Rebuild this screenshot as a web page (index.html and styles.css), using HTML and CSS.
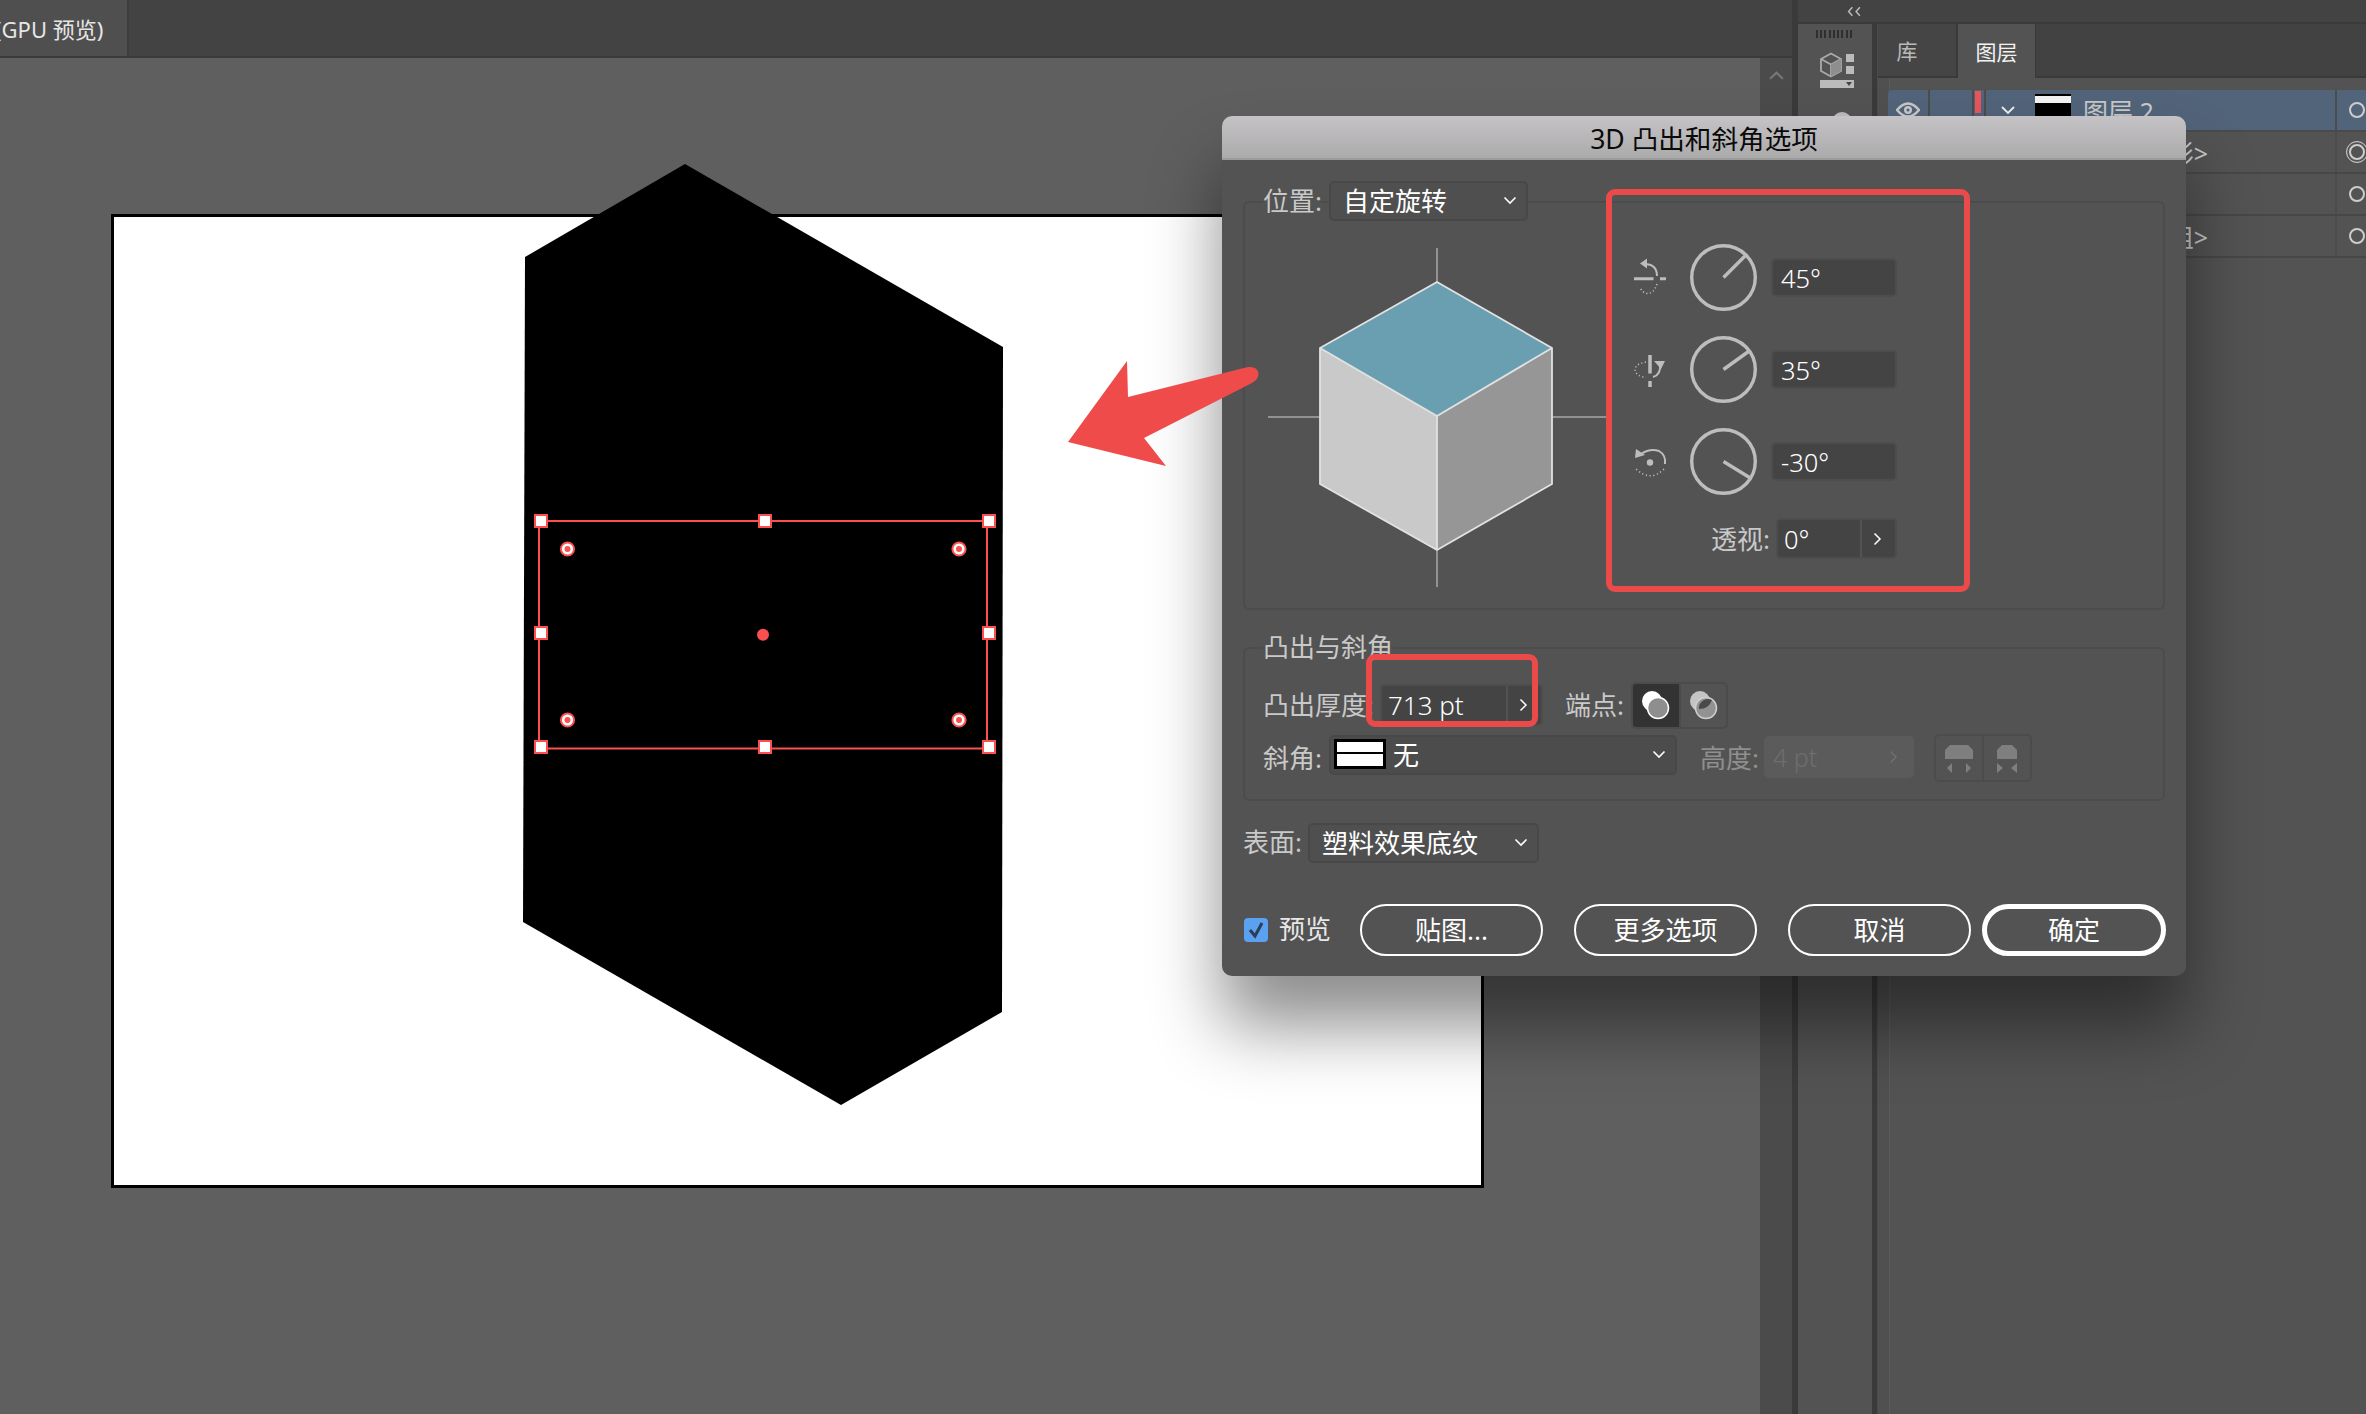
FILE: index.html
```html
<!DOCTYPE html>
<html lang="zh-CN">
<head>
<meta charset="utf-8">
<title>3D 凸出和斜角选项</title>
<link rel="stylesheet" href="styles.css">
</head>
<body>
<div class="app">
  <main class="main">
    <div class="tabbar"><div class="doc-tab"><span class="doc-title">(GPU 预览)</span></div></div>
    <div class="work">
      <div class="canvas">
        <div class="artboard"></div>
        <svg class="art" viewBox="0 58 1760 1356" aria-hidden="true">
          <polygon points="685,164 1003,347 1002,1012 841,1105 523,922 525,257" fill="#000"/>
          <rect x="539" y="521" width="448" height="227.500" fill="none" stroke="#fb4f50" stroke-width="2"/>
          <g fill="#fff" stroke="#fb4f50" stroke-width="2">
            <rect x="535" y="515" width="12" height="12"/><rect x="759" y="515" width="12" height="12"/><rect x="983" y="515" width="12" height="12"/>
            <rect x="535" y="627" width="12" height="12"/><rect x="983" y="627" width="12" height="12"/>
            <rect x="535" y="741" width="12" height="12"/><rect x="759" y="741" width="12" height="12"/><rect x="983" y="741" width="12" height="12"/>
            <circle cx="567.500" cy="549" r="6.600"/><circle cx="959" cy="549" r="6.600"/><circle cx="567.500" cy="720" r="6.600"/><circle cx="959" cy="720" r="6.600"/>
          </g>
          <g fill="#fb4f50">
            <circle cx="763" cy="634.700" r="6"/>
            <circle cx="567.500" cy="549" r="3"/><circle cx="959" cy="549" r="3"/><circle cx="567.500" cy="720" r="3"/><circle cx="959" cy="720" r="3"/>
          </g>
        </svg>
      </div>
      <div class="scrollbar">
        <svg class="scroll-up" viewBox="0 0 14 8" aria-hidden="true"><path d="M1 7 7 1.500 13 7" fill="none" stroke="#777" stroke-width="2"/></svg>
      </div>
    </div>
  </main>

  <aside class="dock">
    <div class="dock-head">
      <svg class="collapse" viewBox="0 0 14 10" aria-hidden="true"><path d="M5 1 1.500 5 5 9M12 1 8.500 5 12 9" fill="none" stroke="#bbb" stroke-width="1.400"/></svg>
    </div>
    <div class="dock-body">
      <div class="toolbar">
        <div class="grip"></div>
        <svg class="tool-3d" viewBox="0 0 36 36" aria-hidden="true">
          <path d="M11 1.500 21 7v12l-10 5.500L1 19V7z" fill="none" stroke="#aaa" stroke-width="1.800"/>
          <path d="M1 7l10 5.500L21 7M11 12.500v12" fill="none" stroke="#aaa" stroke-width="1.800"/>
          <path d="M11 12.500 21 7v12l-10 5.500z" fill="#8e8e8e"/>
          <rect x="26" y="2" width="8" height="8" fill="#bbb"/><rect x="26" y="14" width="8" height="8" fill="#bbb"/>
          <rect x="0" y="28" width="34" height="8" fill="#bbb"/><path d="M26 30h6l-3 4z" fill="#444"/>
        </svg>
        <div class="tool-round"></div>
      </div>
      <div class="panel">
        <div class="panel-tabs">
          <div class="panel-tab panel-tab-off">库</div>
          <div class="panel-tab panel-tab-on">图层</div>
        </div>
        <div class="layers">
          <div class="layer layer-on">
            <div class="cell cell-eye"><svg class="eye" viewBox="0 0 24 16" aria-hidden="true"><path d="M1 8q11-13 22 0-11 13-22 0z" fill="none" stroke="#c8c8c8" stroke-width="2.500"/><circle cx="12" cy="8" r="4" fill="#c8c8c8"/><circle cx="12" cy="8" r="1.500" fill="#52647a"/></svg></div>
            <div class="cell cell-lock"></div>
            <div class="cell cell-mark"></div>
            <div class="layer-main">
              <svg class="layer-chev" viewBox="0 0 16 10" aria-hidden="true"><path d="M2 2l6 6 6-6" fill="none" stroke="#eee" stroke-width="1.800"/></svg>
              <div class="thumb"></div>
              <span class="layer-name">图层 2</span>
            </div>
            <div class="cell cell-target"><div class="ring"></div></div>
          </div>
          <div class="layer">
            <div class="cell cell-eye"></div><div class="cell cell-lock"></div><div class="cell cell-plain"></div>
            <div class="layer-main"><span class="layer-name layer-name-end">&lt;矩形&gt;</span></div>
            <div class="cell cell-target"><div class="ring ring-double"></div></div>
          </div>
          <div class="layer">
            <div class="cell cell-eye"></div><div class="cell cell-lock"></div><div class="cell cell-plain"></div>
            <div class="layer-main"><span class="layer-name">&lt;路径&gt;</span></div>
            <div class="cell cell-target"><div class="ring"></div></div>
          </div>
          <div class="layer">
            <div class="cell cell-eye"></div><div class="cell cell-lock"></div><div class="cell cell-plain"></div>
            <div class="layer-main"><span class="layer-name layer-name-end">&lt;编组&gt;</span></div>
            <div class="cell cell-target"><div class="ring"></div></div>
          </div>
        </div>
      </div>
    </div>
  </aside>

  <section class="dialog">
    <header class="dialog-title">3D 凸出和斜角选项</header>
    <div class="dialog-body">

      <div class="group group-pos">
        <div class="legend">
          <span class="label label-two label-bg">位置:</span>
          <div class="select select-pos"><span>自定旋转</span><svg class="chev-down" viewBox="0 0 14 9" aria-hidden="true"><path d="M1.500 1.500 7 7l5.500-5.500" fill="none" stroke="#fff" stroke-width="1.600"/></svg></div>
        </div>
        <div class="pos-main">
          <svg class="cube" viewBox="0 0 338 339" aria-hidden="true">
            <path d="M169 0v34M169 302v37M0 169h52M284 169h54" stroke="#a8a8a8" stroke-width="1.500" fill="none"/>
            <polygon points="169,34 284,100 169,168 52,100" fill="#6a9fb2"/>
            <polygon points="52,100 169,168 169,302 52,236" fill="#c9c9c9"/>
            <polygon points="284,100 169,168 169,302 284,236" fill="#969696"/>
            <path d="M169 34 284 100V236L169 302 52 236V100zM52 100l117 68 115-68M169 168v134" fill="none" stroke="#e2e2e2" stroke-width="1.800" stroke-linejoin="round"/>
          </svg>
          <div class="rotations">
            <div class="rot-row">
              <svg class="axis" viewBox="1632 256 36 42" aria-hidden="true">
                <path d="M1634 277.700h19.500M1660 277.700h6" stroke="#bdbdbd" stroke-width="3" fill="none"/>
                <path d="M1644 263q13 0 13 12" stroke="#bdbdbd" stroke-width="2" fill="none"/>
                <path d="M1640 262.500l7-5v10z" fill="#bdbdbd"/>
                <path d="M1657 283q-3 9-9 9.500-5 0-8-6" stroke="#bdbdbd" stroke-width="1.500" stroke-dasharray="1.200 2.400" fill="none"/>
              </svg>
              <svg class="dial" viewBox="0 0 67 67" aria-hidden="true"><circle cx="33.500" cy="33.500" r="31.800" fill="none" stroke="#bdbdbd" stroke-width="3.400"/><path d="M33.500 33.500l22-22" stroke="#bdbdbd" stroke-width="3.400"/></svg>
              <div class="field">45°</div>
            </div>
            <div class="rot-row">
              <svg class="axis" viewBox="1632 348 36 42" aria-hidden="true">
                <path d="M1650 354v18.500M1650 380v6" stroke="#bdbdbd" stroke-width="3.500" fill="none"/>
                <path d="M1660 363q1 11-7 13" stroke="#bdbdbd" stroke-width="2" fill="none"/>
                <path d="M1654 360l11 0-4 8z" fill="#bdbdbd"/>
                <path d="M1646 361q-11 2-11 8 1 6 11 7.500" stroke="#bdbdbd" stroke-width="1.500" stroke-dasharray="1.200 2.400" fill="none"/>
              </svg>
              <svg class="dial" viewBox="0 0 67 67" aria-hidden="true"><circle cx="33.500" cy="33.500" r="31.800" fill="none" stroke="#bdbdbd" stroke-width="3.400"/><path d="M33.500 33.500l25-18" stroke="#bdbdbd" stroke-width="3.400"/></svg>
              <div class="field">35°</div>
            </div>
            <div class="rot-row">
              <svg class="axis" viewBox="1632 440 36 42" aria-hidden="true">
                <circle cx="1650" cy="461.500" r="3.200" fill="#bdbdbd"/>
                <path d="M1641 453q9-6 18-3 7 4 6 13" stroke="#bdbdbd" stroke-width="2" fill="none"/>
                <path d="M1635 457l1-9 9 6z" fill="#bdbdbd"/>
                <path d="M1664 468q-14 14-29-1" stroke="#bdbdbd" stroke-width="1.500" stroke-dasharray="1.200 2.600" fill="none"/>
              </svg>
              <svg class="dial" viewBox="0 0 67 67" aria-hidden="true"><circle cx="33.500" cy="33.500" r="31.800" fill="none" stroke="#bdbdbd" stroke-width="3.400"/><path d="M33.500 33.500l26 16" stroke="#bdbdbd" stroke-width="3.400"/></svg>
              <div class="field">-30°</div>
            </div>
            <div class="persp-row">
              <span class="label label-two">透视:</span>
              <div class="stepper stepper-persp"><span class="stepper-value stepper-value-near">0°</span><span class="stepper-arrow"><svg class="chev-right" viewBox="0 0 9 14" aria-hidden="true"><path d="M1.500 1.500 7 7l-5.500 5.500" fill="none" stroke="#fff" stroke-width="1.500"/></svg></span></div>
            </div>
          </div>
        </div>
      </div>

      <div class="group group-extrude">
        <div class="legend legend-text"><span class="label label-bg">凸出与斜角</span></div>
        <div class="ex-row ex-row-first">
          <span class="label label-depth">凸出厚度:</span>
          <div class="stepper stepper-depth"><span class="stepper-value stepper-value-near">713 pt</span><span class="stepper-arrow"><svg class="chev-right" viewBox="0 0 9 14" aria-hidden="true"><path d="M1.500 1.500 7 7l-5.500 5.500" fill="none" stroke="#fff" stroke-width="1.500"/></svg></span></div>
          <span class="label label-two label-cap">端点:</span>
          <div class="toggle">
            <div class="toggle-item toggle-item-on"><svg class="cap" viewBox="0 0 30 30" aria-hidden="true"><circle cx="11" cy="11" r="10" fill="#fff"/><path d="M4 18l8 8 13-14-8-8z" fill="#fff"/><circle cx="17" cy="18" r="10.500" fill="#8e8e8e" stroke="#fff" stroke-width="1.500"/></svg></div>
            <div class="toggle-item"><svg class="cap" viewBox="0 0 30 30" aria-hidden="true"><circle cx="11" cy="11" r="10" fill="#c4c4c4"/><path d="M4 18l8 8 13-14-8-8z" fill="#c4c4c4"/><circle cx="17" cy="18" r="10.500" fill="#929292" stroke="#cfcfcf" stroke-width="1.500"/><path d="M10 19a9 9 0 0 1 13-9q-3 9-13 9z" fill="#4a4a4a"/></svg></div>
          </div>
        </div>
        <div class="ex-row ex-row-second">
          <span class="label label-two">斜角:</span>
          <div class="select select-bevel"><div class="swatch"></div><span class="bevel-name">无</span><svg class="chev-down chev-bevel" viewBox="0 0 14 9" aria-hidden="true"><path d="M1.500 1.500 7 7l5.500-5.500" fill="none" stroke="#fff" stroke-width="1.600"/></svg></div>
          <span class="label label-two label-off">高度:</span>
          <div class="stepper-off"><span>4 pt</span><svg class="chev-right chev-off" viewBox="0 0 9 14" aria-hidden="true"><path d="M1.500 1.500 7 7l-5.500 5.500" fill="none" stroke="#6f6f6f" stroke-width="1.500"/></svg></div>
          <div class="bevel-btns">
            <div class="bevel-btn"><svg class="bevel-icon" viewBox="0 0 30 30" aria-hidden="true"><path d="M1 16V7l5-5h18l5 5v9z" fill="#7f7f7f"/><path d="M8 20l-5 5 5 5zM22 20l5 5-5 5z" fill="#7f7f7f"/></svg></div>
            <div class="bevel-btn"><svg class="bevel-icon" viewBox="0 0 30 30" aria-hidden="true"><path d="M5 16V7l5-5h10l5 5v9z" fill="#7f7f7f"/><path d="M5 20l6 5-6 5zM25 20l-6 5 6 5z" fill="#7f7f7f"/></svg></div>
          </div>
        </div>
      </div>

      <div class="surface-row">
        <span class="label label-two label-surface">表面:</span>
        <div class="select select-surface"><span>塑料效果底纹</span><svg class="chev-down" viewBox="0 0 14 9" aria-hidden="true"><path d="M1.500 1.500 7 7l5.500-5.500" fill="none" stroke="#fff" stroke-width="1.600"/></svg></div>
      </div>

      <div class="actions">
        <div class="check"><svg class="check-mark" viewBox="0 0 24 24" aria-hidden="true"><path d="M6 12l5 6 7-13" fill="none" stroke="#2e3e50" stroke-width="3"/></svg></div>
        <span class="check-label">预览</span>
        <button class="btn btn-first">贴图...</button>
        <button class="btn">更多选项</button>
        <button class="btn">取消</button>
        <button class="btn btn-primary">确定</button>
      </div>
    </div>
    <div class="callout callout-rotate"></div>
    <div class="callout callout-depth"></div>
  </section>

  <svg class="arrow" viewBox="1060 355 210 120" aria-hidden="true">
    <path d="M1068 442 1127 361l1 36 120-30q9-1 10.500 6 .5 6-6.500 10l-108 55 22 28z" fill="#ef4b4b"/>
  </svg>
</div>
</body>
</html>
```

FILE: styles.css
```css
* { box-sizing: border-box; }
html, body { margin: 0; padding: 0; }
body {
  width: 2366px;
  height: 1414px;
  overflow: hidden;
  background: #535353;
  font-family: "Noto Sans", "Noto Sans CJK SC", sans-serif;
}
svg { display: block; flex: none; }

.app { position: relative; display: flex; width: 2366px; height: 1414px; overflow: hidden; }

/* document area */
.main { display: flex; flex-direction: column; width: 1792px; flex: none; }
.tabbar { height: 58px; flex: none; background: #434343; border-bottom: 2px solid #3a3a3a; }
.doc-tab { width: 129px; height: 56px; background: #4f4f4f; border-right: 2px solid #3d3d3d; overflow: hidden; display: flex; align-items: center; }
.doc-title { margin-left: -5px; white-space: nowrap; font-size: 22px; color: #e6e6e6; }
.work { flex: 1; display: flex; min-height: 0; }
.canvas { position: relative; width: 1760px; flex: none; background: #5f5f5f; }
.artboard { position: absolute; left: 111px; top: 156px; width: 1373px; height: 974px; background: #fff; border: 3px solid #000; }
.art { position: absolute; left: 0; top: 0; width: 1760px; height: 1356px; }
.scrollbar { flex: 1; background: #4b4b4b; padding: 13px 0 0 9px; }
.scroll-up { width: 15px; height: 9px; }

/* right dock */
.dock { flex: 1; display: flex; flex-direction: column; border-left: 6px solid #3a3a3a; }
.dock-head { height: 24px; flex: none; background: #434343; border-bottom: 2px solid #3a3a3a; padding: 6px 0 0 49px; }
.collapse { width: 15px; height: 11px; }
.dock-body { flex: 1; display: flex; min-height: 0; }
.toolbar { width: 79px; flex: none; background: #535353; border-right: 5px solid #3a3a3a; padding: 6px 0 0 18px; }
.grip { width: 38px; height: 8px; background: repeating-linear-gradient(90deg, #2f2f2f 0 2px, transparent 2px 4.220px); }
.tool-3d { width: 36px; height: 36px; margin: 14px 0 0 4px; }
.tool-round { width: 20px; height: 20px; margin: 24px 0 0 16px; border-radius: 50%; background: #bdbdbd; }

.panel { flex: 1; min-width: 0; border-left: 1px solid #4b4b4b; background: linear-gradient(90deg, #505050 0 11px, #5a5a5a 11px 12px, #535353 12px); }
.panel-tabs { display: flex; height: 54px; background: #424242; border-bottom: 2px solid #3a3a3a; }
.panel-tab { width: 80px; display: flex; align-items: center; justify-content: center; font-size: 21px; color: #b9b9b9; background: #454545; border-right: 2px solid #3a3a3a; }
.panel-tab-off { padding-right: 20px; }
.panel-tab-on { width: 78px; height: 54px; background: #535353; color: #f2f2f2; border-right: 1px solid #3a3a3a; }
.layers { margin: 12px 0 0 10px; }
.layer { display: flex; height: 42px; border-bottom: 2px solid #474747; background: #535353; }
.layer-on { background: #52647a; border-bottom-color: #4a4a4a; border-radius: 4px 0 0 0; }
.cell { flex: none; display: flex; align-items: center; justify-content: center; border-right: 2px solid #4c4c4c; }
.cell-eye { width: 42px; }
.cell-lock { width: 44px; }
.cell-mark { width: 10px; position: relative; border-right: 0; }
.cell-mark::before { content: ""; width: 6px; height: 22px; background: #e8555a; margin: -16px 2px 0 0; }
.cell-plain { width: 10px; border-right: 0; }
.eye { width: 24px; height: 16px; }
.layer-main { flex: 1; min-width: 0; display: flex; align-items: center; font-size: 25px; color: #c8c8c8; border-left: 2px solid #4c4c4c; position: relative; }
.layer-chev { width: 16px; height: 10px; margin: 0 19px 0 14px; }
.thumb { width: 36px; height: 36px; margin: 4px 12px 0 0; background: linear-gradient(#000 2px, #f4f4f4 2px 9px, #000 9px); flex: none; align-self: flex-start; }
.layer-name { white-space: nowrap; }
.layer-name-end { position: absolute; right: 127px; }
.cell-target { width: 31px; border-right: 0; border-left: 2px solid #4c4c4c; justify-content: flex-start; padding-left: 12px; overflow: hidden; }
.ring { width: 16px; height: 16px; flex: none; border: 2px solid #cdcdcd; border-radius: 50%; }
.ring-double { width: 22px; height: 22px; margin-left: -3px; box-shadow: inset 0 0 0 2px #535353, inset 0 0 0 4px #cdcdcd; border-width: 1.500px; }

/* dialog */
.dialog {
  position: absolute; left: 1222px; top: 116px; width: 964px; height: 860px;
  background: #535353; border-radius: 10px;
  box-shadow: 0 50px 70px rgba(0,0,0,.45);
}
.dialog-title {
  height: 44px; display: flex; align-items: center; justify-content: center;
  font-size: 26.600px; color: #0a0a0a; border-radius: 10px 10px 0 0;
  background: linear-gradient(#c5c3c5, #acabac); border-bottom: 2px solid #9c9c9c;
}
.dialog-body { padding: 41px 21px 0; }
.group { border: 2px solid #4c4c4c; border-radius: 6px; }
.group-pos { height: 409px; }
.group-extrude { height: 154px; margin-top: 37px; }
.legend { display: flex; align-items: center; gap: 8px; margin: -22px 0 0 18px; width: max-content; }
.legend-text { margin-top: -19px; }
.label { font-size: 26px; line-height: 34px; color: #c9c9c9; white-space: nowrap; flex: none; }
.label-two { width: 58px; }
.label-bg { background: #535353; }
.label-depth { width: 109px; }
.label-cap { margin-left: 22px; }
.label-off { color: #8f8f8f; margin-left: 23px; }
.label-surface { padding-bottom: 2px; }

.select {
  display: flex; align-items: center; justify-content: space-between; height: 40px; flex: none;
  background: #4f4f4f; border: 2px solid #484848; border-radius: 5px;
  font-size: 26px; color: #fff; white-space: nowrap; padding-bottom: 2px;
}
.select-pos { width: 199px; padding-left: 12px; padding-right: 9px; }
.select-bevel { width: 348px; padding-left: 3px; padding-right: 9px; justify-content: flex-start; background: #4c4c4c; }
.select-surface { width: 231px; padding-left: 12px; padding-right: 9px; }
.chev-down { width: 14px; height: 9px; }
.chev-bevel { margin-left: auto; }
.swatch { width: 52px; height: 30px; flex: none; border: 3px solid #000; background: linear-gradient(#fff 0 10px, #000 10px 12.500px, #fff 12.500px); }
.bevel-name { margin-left: 7px; }

.pos-main { display: flex; align-items: flex-start; margin: 27px 0 0 23px; }
.cube { width: 338px; height: 339px; }
.rotations { margin: -4px 0 0 26px; width: 265px; }
.rot-row { display: flex; align-items: center; height: 67px; margin-bottom: 25px; }
.axis { width: 36px; height: 42px; }
.dial { width: 67px; height: 67px; margin-left: 22px; }
.field {
  width: 126px; height: 39px; margin-left: 14px; padding-left: 8px;
  display: flex; align-items: center;
  background: #444; border: 2px solid #4d4d4d; border-radius: 5px;
  font-size: 25.500px; font-weight: 300; color: #fff;
}
.persp-row { display: flex; align-items: center; justify-content: flex-end; gap: 7px; margin-top: -2px; }

.stepper { display: flex; flex: none; background: #444; border: 2px solid #4d4d4d; border-radius: 5px; font-size: 25.500px; font-weight: 300; color: #fff; }
.stepper-persp { width: 121px; height: 41px; }
.stepper-depth { width: 163px; height: 42px; font-size: 26px; }
.stepper-value { flex: 1; display: flex; align-items: center; white-space: nowrap; }
.stepper-value-near { padding-left: 6px; }
.stepper-arrow { width: 35px; flex: none; display: flex; align-items: center; justify-content: center; border-left: 2px solid #535353; padding-right: 3px; }
.chev-right { width: 9px; height: 14px; }
.stepper-off { width: 150px; height: 42px; flex: none; margin: -2px 0 0 6px; padding: 0 16px 0 9px; display: flex; align-items: center; justify-content: space-between; background: #5b5b5b; border-radius: 5px; font-size: 25px; font-weight: 300; color: #6e6e6e; }

.ex-row { display: flex; align-items: center; height: 48px; padding-left: 18px; }
.ex-row-first { margin-top: 17px; }
.ex-row-first .stepper { margin-left: 13px; }
.ex-row-first .label-depth { width: 104px; }
.ex-row-second { margin-top: 5px; }
.ex-row-second .select { margin: -6px 0 0 8px; }
.toggle { display: flex; width: 97px; height: 47px; flex: none; margin-left: 8px; border: 2px solid #4b4b4b; border-radius: 5px; overflow: hidden; }
.toggle-item { flex: 1; display: flex; align-items: center; justify-content: center; }
.toggle-item-on { background: #333; flex: none; width: 46px; border-right: 2px solid #4b4b4b; box-sizing: content-box; }
.cap { width: 30px; height: 30px; }
.bevel-btns { display: flex; width: 98px; height: 48px; flex: none; margin-left: 20px; border: 2px solid #4c4c4c; border-radius: 5px; }
.bevel-btn { flex: 1; display: flex; align-items: center; justify-content: center; }
.bevel-btn + .bevel-btn { border-left: 2px solid #4c4c4c; }
.bevel-icon { width: 30px; height: 30px; }

.surface-row { display: flex; align-items: center; gap: 7px; margin-top: 22px; }

.actions { display: flex; align-items: center; margin-top: 41px; }
.check { width: 24px; height: 24px; flex: none; background: #5ba1f2; border-radius: 4px; margin-left: 1px; }
.check-mark { width: 24px; height: 24px; }
.check-label { width: 52px; margin-left: 11px; font-size: 26px; color: #e8e8e8; white-space: nowrap; margin-top: -5px; flex: none; }
.btn {
  width: 183px; height: 52px; margin-left: 31px; flex: none;
  background: transparent; border: 2.500px solid #fff; border-radius: 26px;
  font: inherit; font-size: 26px; color: #fff; padding: 0 0 2px;
}
.btn-first { margin-left: 29px; }
.btn-primary { width: 184px; margin-left: 11px; border-width: 5px; }

/* annotations over the dialog */
.callout { position: absolute; border: 6px solid #ea4a4a; border-radius: 9px; }
.callout-rotate { left: 384px; top: 73px; width: 364px; height: 403px; }
.callout-depth { left: 144px; top: 538px; width: 172px; height: 73px; }
.arrow { position: absolute; left: 1060px; top: 355px; width: 210px; height: 120px; }
```
